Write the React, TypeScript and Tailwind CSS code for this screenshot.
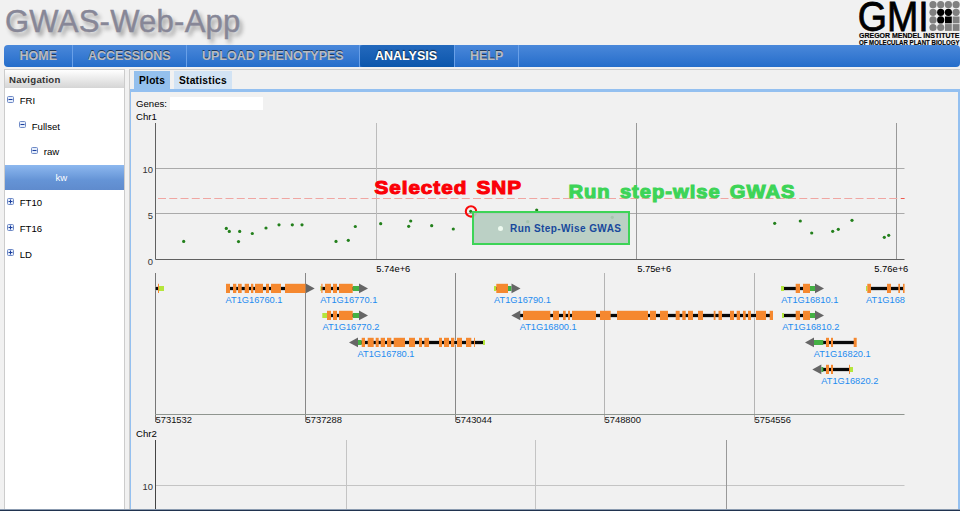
import React from "react";

type Seg = [number, number];
type Gene = {
  name?: string;
  labelX?: number;
  labelW?: number;
  y: number;
  line: Seg;
  exons: Seg[];
  lime?: Seg;
  green?: Seg;
  arrow?: { x: number; dir: 1 | -1 };
};

const NAV = [
  { label: "HOME", cls: "w-[68px] pl-[14.5px]" },
  { label: "ACCESSIONS", cls: "w-[114px] pl-[15px]" },
  { label: "UPLOAD PHENOTYPES", cls: "w-[173px] pl-[15px]" },
  { label: "ANALYSIS", cls: "w-[95px] pl-[15px]", active: true },
  { label: "HELP", cls: "w-[64px] pl-[15px]" },
];

const TREE = [
  { label: "FRI", pad: "pl-[2px]", open: true },
  { label: "Fullset", pad: "pl-[14px]", open: true },
  { label: "raw", pad: "pl-[26px]", open: true },
  { label: "kw", pad: "pl-[50.5px]", selected: true },
  { label: "FT10", pad: "pl-[2px]" },
  { label: "FT16", pad: "pl-[2px]" },
  { label: "LD", pad: "pl-[2px]" },
];

const SNPS: Seg[] = [
  [183.7, 241.4], [226.3, 228.4], [229.3, 231.4], [239.7, 231.4], [238.5, 241.6], [252.3, 233.5],
  [266, 228], [279, 224.8], [292.3, 224.8], [302, 224.8], [336, 241.4], [348.3, 240.3], [355.3, 226.5],
  [380.7, 223.7], [410.7, 221], [408.7, 226.3], [431.7, 225.7], [453.3, 229], [470.7, 211.3],
  [536.7, 210], [527.7, 221.7], [612.3, 217.3], [774.7, 223.3], [800.3, 221], [811.7, 233],
  [832.7, 231.3], [838.3, 229.3], [852, 220.3], [884.3, 237.3], [888.7, 235.3],
];

const GENES: Gene[] = [
  { y: 288.4, line: [155.7, 158], exons: [[158, 159]], lime: [159, 164] },
  {
    name: "AT1G16760.1", labelX: 225.5, y: 288.4, line: [226, 305],
    exons: [[226, 230], [233, 236.3], [238, 241.7], [244.7, 249], [251, 253.3], [255, 263], [266, 269], [271, 281], [285, 305.7]],
    arrow: { x: 305.7, dir: 1 },
  },
  {
    name: "AT1G16770.1", labelX: 320.3, y: 288.4, line: [321, 353],
    exons: [[321.3, 322.5], [325, 331], [333, 337], [339, 352.7]],
    lime: [320.3, 321.3], green: [352.7, 359], arrow: { x: 359, dir: 1 },
  },
  {
    name: "AT1G16770.2", labelX: 322.4, y: 315.4, line: [327, 353],
    exons: [[327, 331], [333, 337], [339, 352.7]],
    lime: [322.3, 327], green: [352.7, 359], arrow: { x: 359, dir: 1 },
  },
  {
    name: "AT1G16780.1", labelX: 357.5, y: 342.4, line: [361, 483],
    exons: [[361.7, 365], [367.7, 373.7], [375.7, 378.7], [380.7, 385], [387, 391.3], [393.7, 405], [409, 415], [419, 422], [424.3, 429], [439, 442], [444, 449], [451, 454.3], [457, 462], [466, 471.3], [474, 475]],
    lime: [483, 485], green: [358, 361.7], arrow: { x: 358, dir: -1 },
  },
  {
    name: "AT1G16790.1", labelX: 494, y: 288.4, line: [496, 508],
    exons: [[496.3, 508]], lime: [494, 496.3], green: [508, 511.5], arrow: { x: 511.5, dir: 1 },
  },
  {
    name: "AT1G16800.1", labelX: 519.7, y: 315.4, line: [520, 772],
    exons: [[523, 550.3], [553, 559], [563, 565.7], [568, 570], [572, 596], [600, 610.7], [617, 648], [650, 656], [660, 668], [675.7, 679.7], [682.3, 685.7], [688, 693], [698, 703], [713.7, 715.5], [718.5, 722], [730, 734], [736.7, 740], [743, 745.7], [748, 751], [756, 766], [769.7, 773]],
    arrow: { x: 520.3, dir: -1 },
  },
  {
    name: "AT1G16810.1", labelX: 781.3, y: 288.4, line: [783, 803],
    exons: [[795.7, 800], [803, 810]], lime: [781, 784], green: [810, 815], arrow: { x: 815, dir: 1 },
  },
  {
    name: "AT1G16810.2", labelX: 782.3, y: 315.4, line: [783.5, 803],
    exons: [[795.7, 800], [803, 810]], lime: [782, 784], green: [810, 815], arrow: { x: 815, dir: 1 },
  },
  {
    name: "AT1G168", labelX: 866, labelW: 39, y: 288.4, line: [870, 903],
    exons: [[867.3, 871], [887, 891], [898.3, 900], [903, 904.6]], lime: [866, 867.3],
  },
  {
    name: "AT1G16820.1", labelX: 813.7, y: 342.4, line: [823, 855],
    exons: [[826, 829], [831, 833], [853.7, 856.7]], green: [814, 823.3], arrow: { x: 814, dir: -1 },
  },
  {
    name: "AT1G16820.2", labelX: 821.3, y: 369.4, line: [823, 850],
    exons: [[826, 829], [831, 833], [849, 850]], lime: [850, 853], green: [821.3, 823.3], arrow: { x: 821.3, dir: -1 },
  },
];

const POSITIONS: [number, string, string][] = [
  [155.5, "5731532", "#777"],
  [305.5, "5737288", "#888"],
  [455.5, "5743044", "#888"],
  [604.5, "5748800", "#b4b4b4"],
  [754.5, "5754556", "#b4b4b4"],
];

function Logo() {
  const dots = [0, 1, 2, 3].flatMap((r) => [0, 1, 2, 3].map((c) => ({ r, c })));
  return (
    <svg width="104" height="45" viewBox="856 0 104 45" fontFamily="Liberation Sans, Arial, sans-serif">
      <text x="857.8" y="31" fontSize="42" textLength="71" lengthAdjust="spacingAndGlyphs" stroke="#000" strokeWidth="0.8">GMI</text>
      {dots.map(({ r, c }) => {
        const x = 933 + c * 7.7;
        const y = 4.7 + r * 7.6;
        const fill = (r === 1 || r === 2) && (c === 1 || c === 2) ? "#000" : "#808080";
        return r >= 2 && c >= 2 ? (
          <rect key={`${r}${c}`} x={x - 3.4} y={y - 3.4} width="6.8" height="6.8" fill={fill} />
        ) : (
          <circle key={`${r}${c}`} cx={x} cy={y} r="3.6" fill={fill} />
        );
      })}
      <g fontWeight="bold" stroke="#000" strokeWidth="0.15">
        <text x="859" y="38.2" fontSize="7.2" textLength="100.5" lengthAdjust="spacingAndGlyphs">GREGOR MENDEL INSTITUTE</text>
        <text x="859" y="44.8" fontSize="6.6" textLength="100.5" lengthAdjust="spacingAndGlyphs">OF MOLECULAR PLANT BIOLOGY</text>
      </g>
    </svg>
  );
}

function Toggle({ open }: { open?: boolean }) {
  return (
    <svg width="7" height="7" viewBox="0 0 7 7" className="-mt-[3px] mr-[5.7px] shrink-0">
      <rect x="0.5" y="0.5" width="6" height="6" rx="1" fill="#e6eefb" stroke="#6f8ac6" />
      <path d="M1.5 3.5h4" stroke="#1c3f9c" />
      {!open && <path d="M3.5 1.5v4" stroke="#1c3f9c" />}
    </svg>
  );
}

function GeneGlyph({ g }: { g: Gene }) {
  const a = g.arrow;
  return (
    <g>
      <rect x={g.line[0]} y={g.y - 2.2} width={g.line[1] - g.line[0]} height="4.6" fill="#c8c8c8" />
      <rect x={g.line[0]} y={g.y - 1.4} width={g.line[1] - g.line[0]} height="3" fill="#080808" />
      {g.lime && <rect x={g.lime[0]} y={g.y - 2.4} width={g.lime[1] - g.lime[0]} height="5" fill="#b5e63c" />}
      {g.green && <rect x={g.green[0]} y={g.y - 2.4} width={g.green[1] - g.green[0]} height="5" fill="#43b044" />}
      {g.exons.map(([s, e]) => (
        <rect key={s} x={s} y={g.y - 4.6} width={e - s} height="9.2" fill="#f5882f" />
      ))}
      {a && <path d={`M${a.x} ${g.y - 4.8}L${a.x + a.dir * 9} ${g.y}L${a.x} ${g.y + 4.8}Z`} fill="#666" />}
      {g.name && (
        <text x={g.labelX} y={g.y + 14.2} fontSize="9.6" textLength={g.labelW ?? 57} lengthAdjust="spacingAndGlyphs" fill="#1e8cf0">{g.name}</text>
      )}
    </g>
  );
}

function ChromosomeOne() {
  return (
    <svg width="825" height="307" viewBox="132 123 825 307" className="block" fontFamily="Liberation Sans, Arial, sans-serif" fontSize="9.4">
      <g stroke="#aaa">
        <path d="M156 168.5H904.5M156 213.5H904.5" />
        <path d="M376.5 123V260" stroke="#bcbcbc" />
        <path d="M636.5 123V260M896.5 123V260" stroke="#999" />
      </g>
      <path d="M155.5 123V259.5H904.5" fill="none" stroke="#606060" />
      <path d="M158 198.5H904.5" stroke="#f0a6a2" strokeDasharray="8 3.25" />
      <path d="M901 198.5H904.5" stroke="#f05a50" />
      <g textAnchor="end" fill="#333">
        <text x="153" y="173.2">10</text>
        <text x="153" y="218.8">5</text>
        <text x="153" y="264.6">0</text>
      </g>
      <text x="376.3" y="271.6" textLength="34">5.74e+6</text>
      <text x="637.2" y="271.6" textLength="34">5.75e+6</text>
      <text x="874.3" y="271.6" textLength="34">5.76e+6</text>
      {SNPS.map(([x, y]) => (
        <circle key={x} cx={x} cy={y} r="1.6" fill="#23801c" />
      ))}
      <circle cx="471" cy="211.4" r="5.2" fill="none" stroke="#f80b0b" strokeWidth="2.1" />
      {POSITIONS.map(([x, t, c]) => (
        <g key={t}>
          <path d={`M${x} 273V422`} stroke={c} />
          <text x={x} y="423" textLength="36.5" fill="#111">{t}</text>
        </g>
      ))}
      <path d="M155 414.5H904.5" stroke="#8f958f" />
      {GENES.map((g, i) => (
        <GeneGlyph key={i} g={g} />
      ))}
    </svg>
  );
}

function ChromosomeTwo() {
  return (
    <svg width="825" height="69" viewBox="132 440 825 69" className="block" fontFamily="Liberation Sans, Arial, sans-serif" fontSize="9.4">
      <path d="M156 485.5H904.5" stroke="#c4c4c4" />
      <path d="M346.5 440V509M535.5 440V509" stroke="#c4c4c4" />
      <path d="M726.5 440V509" stroke="#999" />
      <path d="M155.5 440V509" stroke="#444" />
      <text x="153" y="490.2" textAnchor="end" fill="#333">10</text>
    </svg>
  );
}

function Annotations() {
  return (
    <svg
      className="pointer-events-none absolute left-[370px] top-[170px]"
      width="430"
      height="36"
      viewBox="370 170 430 36"
      fontFamily="Liberation Sans, Arial, sans-serif"
      fontWeight="bold"
      fontSize="19.2"
      strokeWidth="1.1"
      letterSpacing="0.9"
      wordSpacing="2.5"
    >
      <text x="374.5" y="193.6" textLength="147.5" lengthAdjust="spacingAndGlyphs" fill="#fb0007" stroke="#fb0007">Selected SNP</text>
      <text x="568.5" y="198.4" textLength="227" lengthAdjust="spacingAndGlyphs" fill="#3dd457" stroke="#3dd457">Run step-wise GWAS</text>
    </svg>
  );
}

export default function App() {
  return (
    <div className="relative flex h-[511px] w-[960px] flex-col overflow-hidden bg-[#f1f1f1] font-['Liberation_Sans',Arial,sans-serif] text-[9.6px] text-black">
      <header className="flex h-[45px] shrink-0 justify-between pl-[5px]">
        <h1 className="pt-[4px] text-[31px] leading-[36px] tracking-[0.25px] text-[#878797] [-webkit-text-stroke:0.4px_#878797] [text-shadow:3px_4px_4px_#999]">GWAS-Web-App</h1>
        <Logo />
      </header>

      <nav className="ml-1 flex h-[22px] shrink-0 overflow-hidden rounded-[4px] bg-linear-to-b from-[#4a88da] to-[#246dca] pl-px">
        {NAV.map((n) => (
          <a
            key={n.label}
            className={`${n.cls} h-full shrink-0 whitespace-nowrap border-r border-[#69a0e8] text-[12.5px] font-bold leading-[22px] ${
              n.active
                ? "rounded-l-[3px] bg-linear-to-b from-[#2369bd] to-[#0a56ac] text-white [text-shadow:0_-1px_1px_#123]"
                : "text-[#b9bcc0] [text-shadow:0_-1px_0_#21395a]"
            }`}
          >
            {n.label}
          </a>
        ))}
      </nav>

      <main className="flex min-h-0 flex-1 pt-[2px]">
        <aside className="ml-1 w-[121px] shrink-0 border border-b-0 border-[#ccc] bg-white">
          <h2 className="h-[18px] bg-linear-to-b from-white to-[#d5d5d5] pl-[4px] text-[9.6px] font-bold leading-[20px] tracking-[0.25px] text-[#333]">Navigation</h2>
          {TREE.map((t) => (
            <div
              key={t.label}
              className={`flex h-[25.6px] items-center ${t.pad} ${
                t.selected ? "bg-linear-to-b from-[#8db8ef] via-[#6594d6] via-60% to-[#5f8bcd] text-white" : ""
              }`}
            >
              {!t.selected && <Toggle open={t.open} />}
              <span className="pt-px">{t.label}</span>
            </div>
          ))}
        </aside>

        <section className="ml-[4px] flex min-w-0 flex-1 flex-col border-l border-t border-[#ccc]">
          <div className="flex h-[19px] shrink-0 items-stretch gap-[4px] pl-[4px] pt-px text-[10.2px] font-bold leading-[20px] tracking-[0.25px]">
            <div className="w-[36px] bg-[#94c0ed] pl-[5px]">Plots</div>
            <div className="w-[58px] bg-[#d2e3f4] pl-[5px]">Statistics</div>
          </div>
          <div className="min-h-0 flex-1 overflow-hidden border-l border-r-2 border-t-[3px] border-[#94c0f0] bg-[#f1f1f1] pl-px">
            <div className="flex h-[18px] items-end pl-[4px]">
              <label className="w-[31px] leading-[12px]">Genes:</label>
              <div className="ml-[3px] h-[13px] w-[93px] bg-white" />
            </div>
            <div className="h-[13px] pl-[4px] leading-[14px]">Chr1</div>
            <ChromosomeOne />
            <div className="h-[10px] pl-[4px] leading-[7px]">Chr2</div>
            <ChromosomeTwo />
          </div>
        </section>
      </main>
      <footer className="h-[2px] shrink-0 border-t border-[#8b9bb0] bg-[#20334f]" />

      <Annotations />
      <div className="absolute left-[472px] top-[211px] flex h-[34px] w-[158px] items-center border-2 border-[#3dd457] bg-[#b5ccc0]/90 pl-[24px] text-[10px] font-bold text-[#17499c]">
        <span className="mr-[7px] size-[5px] rounded-full bg-[#eefaf0]" />
        <span className="whitespace-nowrap tracking-[0.42px]">Run Step-Wise GWAS</span>
      </div>
    </div>
  );
}
